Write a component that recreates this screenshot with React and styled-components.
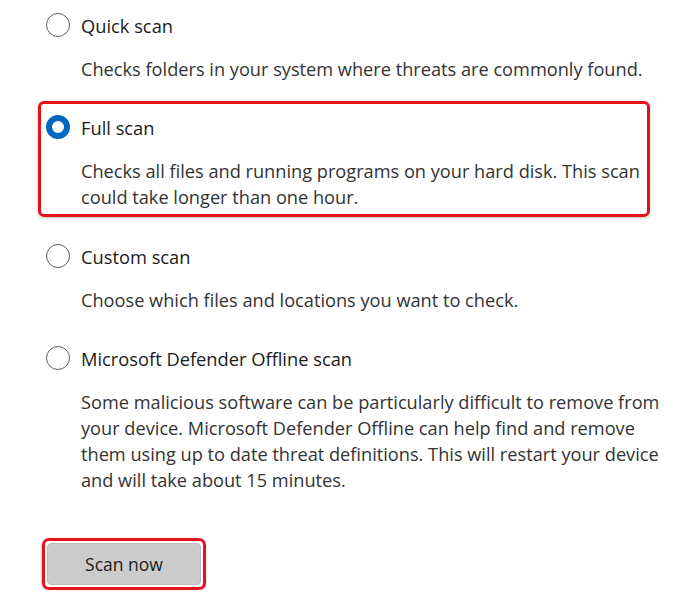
import React, { useState } from 'react';
import styled, { createGlobalStyle } from 'styled-components';

const GlobalStyle = createGlobalStyle`
  body {
    margin: 0;
    background: #ffffff;
    font-family: 'Open Sans', 'Noto Sans', sans-serif;
  }
`;

const options = [
  {
    id: 'quick',
    name: 'Quick scan',
    lines: ['Checks folders in your system where threats are commonly found.'],
  },
  {
    id: 'full',
    name: 'Full scan',
    lines: [
      'Checks all files and running programs on your hard disk. This scan',
      'could take longer than one hour.',
    ],
  },
  {
    id: 'custom',
    name: 'Custom scan',
    lines: ['Choose which files and locations you want to check.'],
  },
  {
    id: 'offline',
    name: 'Microsoft Defender Offline scan',
    lines: [
      'Some malicious software can be particularly difficult to remove from',
      'your device. Microsoft Defender Offline can help find and remove',
      'them using up to date threat definitions. This will restart your device',
      'and will take about 15 minutes.',
    ],
  },
];

const App = () => {
  const [selected, setSelected] = useState('full');
  return (
    <>
      <GlobalStyle />
      <Page>
        {options.map((opt) => (
          <Option
            key={opt.id}
            highlighted={opt.id === 'full'}
            spaced={opt.id === 'offline'}
            onClick={() => setSelected(opt.id)}
          >
            <Row>
              <Radio checked={selected === opt.id} />
              <Label>{opt.name}</Label>
            </Row>
            <Description>
              {opt.lines.map((line, i) => (
                <Line key={i}>{line}</Line>
              ))}
            </Description>
          </Option>
        ))}
        <ButtonRing>
          <ScanButton>Scan now</ScanButton>
        </ButtonRing>
      </Page>
    </>
  );
};

export default App;

const Page = styled.div`
  padding: 5px 0 0 38px;
  display: flex;
  flex-direction: column;
  align-items: flex-start;
  gap: 19px;
  color: #1b1b1b;
`;

const Option = styled.div.withConfig({
  shouldForwardProp: (p) => p !== 'highlighted' && p !== 'spaced',
})`
  box-sizing: border-box;
  width: 612px;
  margin-top: ${(p) => (p.spaced ? '6px' : '0')};
  padding: ${(p) => (p.highlighted ? '3px 0 4px 5px' : '0 0 0 8px')};
  border: ${(p) => (p.highlighted ? '3px solid #e5121b' : '0')};
  border-radius: 6px;
  box-shadow: ${(p) => (p.highlighted ? '0 1px 3px rgba(0, 0, 0, 0.25)' : 'none')};
  cursor: pointer;
`;

const Row = styled.div`
  display: flex;
  align-items: center;
  height: 40px;
  gap: 11px;
`;

const Radio = styled.span.withConfig({
  shouldForwardProp: (p) => p !== 'checked',
})`
  box-sizing: border-box;
  width: 24px;
  height: 24px;
  border-radius: 50%;
  flex-shrink: 0;
  background: #ffffff;
  border: ${(p) => (p.checked ? '6px solid #0067c0' : '1px solid #5c5c5c')};
`;

const Label = styled.span`
  font-size: 18.3px;
  color: #1b1b1b;
`;

const Description = styled.div`
  margin-top: 11px;
  margin-left: 35px;
  font-size: 18.2px;
  line-height: 26px;
  color: #333333;
`;

const Line = styled.span`
  display: block;
  white-space: nowrap;
`;

const ButtonRing = styled.div`
  margin-top: 26px;
  margin-left: 4px;
  padding: 2px;
  border: 3px solid #e5121b;
  border-radius: 7px;
  box-shadow: 0 1px 3px rgba(0, 0, 0, 0.25);
`;

const ScanButton = styled.button`
  width: 154px;
  height: 42px;
  border: 1px solid #bdbdbd;
  border-radius: 4px;
  background: #cccccc;
  font-family: 'Open Sans', 'Noto Sans', sans-serif;
  font-size: 17.5px;
  color: #1b1b1b;
  cursor: pointer;
`;
